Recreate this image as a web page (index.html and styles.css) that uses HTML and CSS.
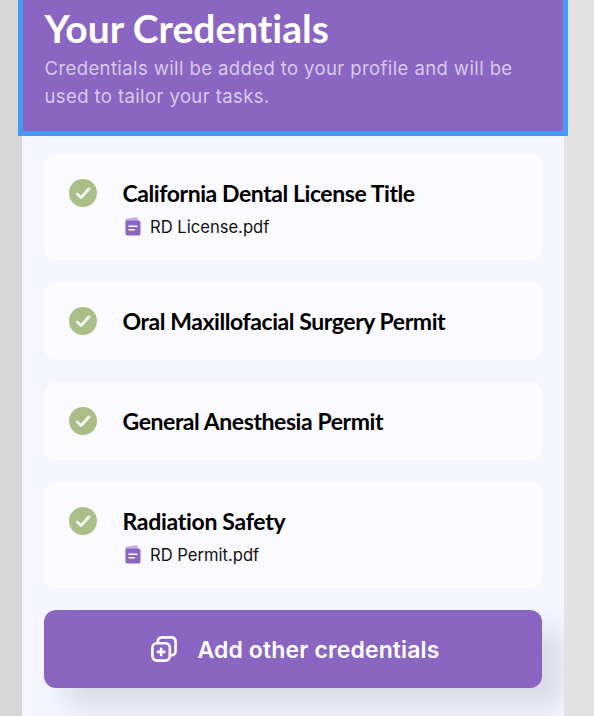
FILE: index.html
```html
<!DOCTYPE html>
<html lang="en">
<head>
  <meta charset="UTF-8">
  <meta name="viewport" content="width=device-width, initial-scale=1.0">
  <title>Your Credentials</title>
  <link rel="stylesheet" href="styles.css">
</head>
<body>
  <!-- Shared icons -->
  <svg class="sprite" width="0" height="0">
    <symbol id="check" viewBox="0 0 28 28">
      <circle cx="14" cy="14" r="14" fill="#aabf87"/>
      <path d="M8.1 14.9l3.8 3.7 8-8.6" fill="none" stroke="#fff" stroke-width="2.7" stroke-linecap="round" stroke-linejoin="round"/>
    </symbol>
    <symbol id="file" viewBox="0 0 16 19">
      <path d="M.5 4V3q0-1.2 1.2-1.4L11.5.3q1.2-.1 1.3 1V4z" fill="#c5b1e1"/>
      <path d="M.5 3.5h13q2 0 2 2v11q0 2-2 2h-11q-2 0-2-2z" fill="#8a65c2"/>
      <path d="M4 9.3h8M4 12.7h5.3" stroke="#fff" stroke-width="1.4" stroke-linecap="round"/>
    </symbol>
  </svg>

  <div class="panel">
    <header>
      <h1>Your Credentials</h1>
      <p>Credentials will be added to your profile and will be used to tailor your tasks.</p>
    </header>

    <div class="credentials">
      <div class="card with-file">
        <svg class="check"><use href="#check"/></svg>
        <div class="info">
          <h2>California Dental License Title</h2>
          <div class="file"><svg><use href="#file"/></svg><span>RD License.pdf</span></div>
        </div>
      </div>
      <div class="card">
        <svg class="check"><use href="#check"/></svg>
        <h2>Oral Maxillofacial Surgery Permit</h2>
      </div>
      <div class="card">
        <svg class="check"><use href="#check"/></svg>
        <h2>General Anesthesia Permit</h2>
      </div>
      <div class="card with-file">
        <svg class="check"><use href="#check"/></svg>
        <div class="info">
          <h2 class="short">Radiation Safety</h2>
          <div class="file"><svg><use href="#file"/></svg><span>RD Permit.pdf</span></div>
        </div>
      </div>

      <button class="add">
        <svg viewBox="0 0 26 26" fill="none" stroke="#fff" stroke-width="2.6" stroke-linecap="round" stroke-linejoin="round">
          <rect x="1.4" y="7.2" width="17.4" height="17.4" rx="4.5"/>
          <path d="M6.8 7V5.9q0-4.5 4.5-4.5h8.8q4.5 0 4.5 4.5v8.8q0 4.5-4.5 4.5H19M10.1 12.7v6.4M6.9 15.9h6.4"/>
        </svg>
        <span>Add other credentials</span>
      </button>
    </div>
  </div>
</body>
</html>
```

FILE: styles.css
```css
body {
  margin: 0;
  height: 716px;
  overflow: hidden;
  background: linear-gradient(90deg, #d7d7d7, #e2e2e2);
  font-family: Inter, sans-serif;
}
h1, h2, p {
  margin: 0;
}
.sprite {
  position: absolute;
}
.panel {
  width: 542px;
  height: 716px;
  margin-left: 22px;
  background-color: #f4f5fe;
}
header {
  box-sizing: border-box;
  height: 136px;
  margin: 0 -4px;
  padding: 2px 20px 0 21.5px;
  border: 5px solid #4699f5;
  border-top: none;
  background-color: #8a65c2;
}
h1 {
  font: bold 39px/52px Lato, sans-serif;
  letter-spacing: -0.03px;
  font-variant-ligatures: none;
  white-space: nowrap;
  color: #fff;
}
header p {
  font-size: 18.5px;
  line-height: 28px;
  letter-spacing: 0.4px;
  color: #d9cbed;
}
.credentials {
  display: flex;
  flex-direction: column;
  gap: 22px;
  height: 580px;
  box-sizing: border-box;
  padding: 18px 22px 0;
  overflow: hidden;
}
.card {
  display: flex;
  flex-shrink: 0;
  align-items: center;
  box-sizing: border-box;
  height: 78px;
  padding-left: 25px;
  border-radius: 12px;
  background-color: #fbfbff;
}
.card.with-file {
  align-items: flex-start;
  height: 106px;
  padding-top: 25px;
}
.check {
  flex-shrink: 0;
  width: 28px;
  height: 28px;
  margin-right: 25.5px;
}
h2 {
  font: bold 23px/30px Lato, sans-serif;
  letter-spacing: -0.43px;
  white-space: nowrap;
  color: #000;
}
h2.short {
  letter-spacing: -0.3px;
}
.with-file h2 {
  line-height: 28px;
}
.file {
  display: flex;
  align-items: center;
  height: 24px;
  margin-top: 8px;
  padding-left: 2.5px;
  font-size: 16.6px;
  color: #111;
}
.file svg {
  width: 16px;
  height: 19px;
  margin: 0 9px 2px 0;
}
.add {
  display: flex;
  flex-shrink: 0;
  align-items: center;
  justify-content: center;
  gap: 20px;
  height: 78px;
  padding: 1px 0 0 5px;
  border: none;
  border-radius: 12px;
  background-color: #8a65c2;
  box-shadow: 22px 20px 24px rgba(70, 70, 90, 0.14);
  font: 600 23px Inter, sans-serif;
  letter-spacing: 0.13px;
  color: #fff;
}
.add svg {
  width: 26px;
  height: 26px;
  margin-bottom: 1px;
}
```
